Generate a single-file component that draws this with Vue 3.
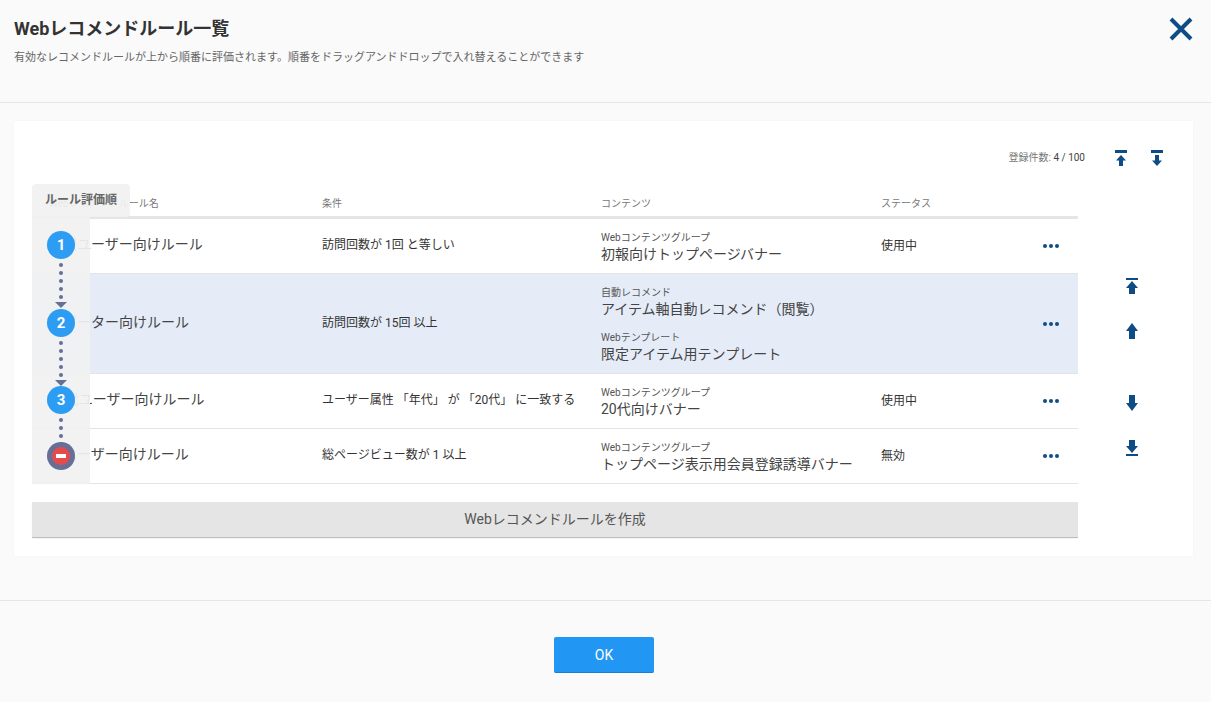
<template>
  <div class="page">
    <header class="head">
      <div>
        <h1>Webレコメンドルール一覧</h1>
        <p>有効なレコメンドルールが上から順番に評価されます。順番をドラッグアンドドロップで入れ替えることができます</p>
      </div>
      <svg class="close" viewBox="0 0 24 24"><path d="M2 2 22 22M22 2 2 22" /></svg>
    </header>

    <main class="body">
      <section class="card">
        <div class="tools">
          <span class="count">登録件数: <b>4 / 100</b></span>
          <svg class="mini" viewBox="0 0 12 16"><path d="M0 0H12V3H0ZM6 5 11 10.500H8V16H4V10.500H1Z" /></svg>
          <svg class="mini" viewBox="0 0 12 16"><path d="M0 0H12V3H0ZM4 5H8V10.500H11L6 16 1 10.500H4Z" /></svg>
        </div>

        <div class="main">
          <div class="left">
            <div class="table">
              <div class="row th">
                <div class="name">Webレコメンドルール名</div>
                <div>条件</div>
                <div>コンテンツ</div>
                <div>ステータス</div>
                <div></div>
              </div>
              <div v-for="rule in rules" :key="rule.name" class="row td" :class="{ on: rule.active }">
                <div class="name rule">{{ rule.name }}</div>
                <div class="cond">{{ rule.cond }}</div>
                <div class="contents">
                  <div v-for="c in rule.contents" :key="c.label" class="content">
                    <small>{{ c.label }}</small>
                    <span>{{ c.title }}</span>
                  </div>
                </div>
                <div class="status">{{ rule.status }}</div>
                <div class="more"><i></i><i></i><i></i></div>
              </div>

              <!-- 評価順の列は表の上に重なる -->
              <div class="order">
                <div class="order-title">ルール評価順</div>
                <div class="steps">
                  <div class="step s1">
                    <div class="num">1</div>
                    <div class="dots"><i v-for="n in 5" :key="n"></i></div>
                    <div class="arrow"></div>
                  </div>
                  <div class="step s2">
                    <div class="num">2</div>
                    <div class="dots"><i v-for="n in 5" :key="n"></i></div>
                    <div class="arrow"></div>
                  </div>
                  <div class="step s3">
                    <div class="num">3</div>
                    <div class="dots"><i v-for="n in 4" :key="n"></i></div>
                  </div>
                  <div class="step s4">
                    <div class="num off"><span></span></div>
                  </div>
                </div>
              </div>
            </div>
            <button class="create">Webレコメンドルールを作成</button>
          </div>

          <div class="side">
            <svg viewBox="0 0 12 16"><path d="M0 0H12V2H0ZM6 3 12 10H9V16H3V10H0Z" /></svg>
            <svg viewBox="0 0 12 16"><path d="M6 0 12 8H9V16H3V8H0Z" /></svg>
            <svg viewBox="0 0 12 16"><path d="M3 0H9V8H12L6 16 0 8H3Z" /></svg>
            <svg viewBox="0 0 12 16"><path d="M3 0H9V6H12L6 13 0 6H3ZM0 14H12V16H0Z" /></svg>
          </div>
        </div>
      </section>
    </main>

    <footer class="foot">
      <button class="ok">OK</button>
    </footer>
  </div>
</template>

<script setup>
const rules = [
  {
    name: '初報ユーザー向けルール',
    cond: '訪問回数が 1回 と等しい',
    contents: [{ label: 'Webコンテンツグループ', title: '初報向けトップページバナー' }],
    status: '使用中'
  },
  {
    name: 'リピーター向けルール',
    cond: '訪問回数が 15回 以上',
    contents: [
      { label: '自動レコメンド', title: 'アイテム軸自動レコメンド（閲覧）' },
      { label: 'Webテンプレート', title: '限定アイテム用テンプレート' }
    ],
    status: '',
    active: true
  },
  {
    name: '20代ユーザー向けルール',
    cond: 'ユーザー属性 「年代」 が 「20代」 に一致する',
    contents: [{ label: 'Webコンテンツグループ', title: '20代向けバナー' }],
    status: '使用中'
  },
  {
    name: '全ユーザー向けルール',
    cond: '総ページビュー数が 1 以上',
    contents: [{ label: 'Webコンテンツグループ', title: 'トップページ表示用会員登録誘導バナー' }],
    status: '無効'
  }
]
</script>

<style>
body {
  background: #fafafa;
}
</style>

<style scoped>
.page {
  width: 1211px;
  height: 702px;
  overflow: hidden;
  background: #fafafa;
  color: #333;
  font-family: Roboto, "Noto Sans CJK JP", sans-serif;
}

.head {
  height: 102px;
  box-sizing: content-box;
  border-bottom: 1px solid #e5e5e5;
  padding: 0 18px 0 14px;
  display: flex;
  justify-content: space-between;
}
.head h1 {
  margin: 19px 0 0;
  font-size: 18px;
  line-height: 20px;
  font-weight: 700;
  color: #333;
}
.head p {
  margin: 12px 0 0;
  font-size: 11px;
  line-height: 14px;
  color: #666;
}
.close {
  width: 24px;
  height: 24px;
  margin-top: 17px;
}
.close path {
  fill: none;
  stroke: #0e4c85;
  stroke-width: 4;
}

.body {
  padding: 18px 18px 0 14px;
}
.card {
  height: 435px;
  box-sizing: border-box;
  background: #fff;
  box-shadow: 0 0 2px rgba(0, 0, 0, 0.04);
  padding: 29px 0 0 18px;
}

.tools {
  height: 16px;
  display: flex;
  align-items: center;
  padding-right: 30px;
  justify-content: flex-end;
}
.count {
  font-size: 10px;
  color: #777;
  margin: 0 30px 4px 0;
}
.count b {
  font-weight: 400;
  color: #444;
}
.mini {
  width: 12px;
  height: 16px;
  fill: #0e4c85;
}
.mini + .mini {
  margin-left: 24px;
}

.main {
  display: flex;
  margin-top: 24px;
}
.left {
  width: 1046px;
}

.table {
  position: relative;
}
.row {
  display: grid;
  grid-template-columns: 290px 279px 280px 149px 48px;
  align-items: center;
  box-sizing: border-box;
}
.th {
  height: 29px;
  border-bottom: 3px solid #e5e5e5;
  font-size: 10px;
  color: #777;
  padding-bottom: 2px;
}
.name {
  padding-left: 17px;
  white-space: nowrap;
}
.td {
  min-height: 55px;
  border-bottom: 1px solid #e3e3e3;
  font-size: 12px;
  color: #333;
}
.td.on {
  background: #e5ecf8;
}
.rule {
  font-size: 14px;
  margin-top: -6px;
  padding-left: 17px;
  color: #444;
}
.cond {
  font-size: 12px;
  white-space: nowrap;
  margin-top: -5px;
}
.status {
  margin-top: -4px;
}
.contents {
  display: flex;
  flex-direction: column;
  gap: 13px;
  padding: 13px 0 9px;
}
.content {
  display: flex;
  flex-direction: column;
}
.content small {
  font-size: 10px;
  line-height: 12px;
  color: #555;
}
.content span {
  font-size: 14px;
  line-height: 20px;
  color: #444;
  white-space: nowrap;
}
.more {
  display: flex;
  gap: 2px;
  padding-left: 13px;
}
.more i {
  width: 4px;
  height: 4px;
  border-radius: 50%;
  background: #0e4c85;
}

.order {
  position: absolute;
  left: 0;
  top: -6px;
  width: 58px;
  bottom: 0;
}
.order-title {
  width: 98px;
  height: 33px;
  box-sizing: border-box;
  line-height: 33px;
  text-align: center;
  font-size: 12px;
  font-weight: 700;
  color: #666;
  background: rgba(241, 241, 241, 0.93);
  border-radius: 4px 4px 4px 0;
}
.steps {
  height: 267px;
  background: rgba(241, 241, 241, 0.93);
}
.step {
  position: absolute;
  left: 15px;
  width: 28px;
}
.s1 { top: 47px; }
.s2 { top: 125px; }
.s3 { top: 202px; }
.s4 { top: 258px; }
.num {
  width: 28px;
  height: 28px;
  border-radius: 50%;
  background: #2d9df4;
  color: #fff;
  font-size: 15px;
  font-weight: 700;
  line-height: 28px;
  text-align: center;
}
.num.off {
  background: #666f96;
  display: flex;
  align-items: center;
  justify-content: center;
}
.num.off span {
  width: 18px;
  height: 18px;
  border-radius: 50%;
  background: #e74a4a;
  position: relative;
}
.num.off span::after {
  content: "";
  position: absolute;
  left: 4px;
  top: 7px;
  width: 10px;
  height: 4px;
  background: #fff;
}
.dots {
  display: flex;
  flex-direction: column;
  align-items: center;
  gap: 4px;
  margin-top: 4px;
}
.dots i {
  width: 4px;
  height: 4px;
  border-radius: 50%;
  background: #666f96;
}
.arrow {
  width: 0;
  height: 0;
  margin: 3px auto 0;
  border-left: 6px solid transparent;
  border-right: 6px solid transparent;
  border-top: 6px solid #666f96;
}

.create {
  display: block;
  width: 100%;
  height: 36px;
  margin-top: 18px;
  padding: 0 0 3px;
  border: none;
  border-bottom: 1px solid #bdbdbd;
  background: #e5e5e5;
  box-shadow: 0 1px 2px -1px rgba(0, 0, 0, 0.12);
  font-family: inherit;
  font-size: 14px;
  color: #555;
}

.side {
  width: 108px;
  display: flex;
  flex-direction: column;
  align-items: center;
  padding-top: 88px;
  gap: 28px;
}
.side svg {
  width: 12px;
  height: 16px;
  fill: #0e4c85;
}
.side svg:nth-child(2) {
  margin-top: 1px;
}
.side svg:nth-child(3) {
  margin-top: 28px;
}
.side svg:nth-child(4) {
  margin-top: 1px;
}

.foot {
  margin-top: 44px;
  border-top: 1px solid #e5e5e5;
  display: flex;
  justify-content: center;
  padding: 36px 3px 0 0;
}
.ok {
  width: 100px;
  height: 36px;
  border: none;
  border-bottom: 1px solid #1a7fd0;
  border-radius: 2px;
  background: #2196f3;
  color: #fff;
  font-family: inherit;
  font-size: 14px;
}
</style>
